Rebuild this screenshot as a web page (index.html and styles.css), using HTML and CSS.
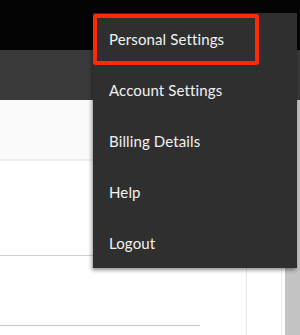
FILE: index.html
```html
<!DOCTYPE html>
<html lang="en">
<head>
    <meta charset="UTF-8">
    <meta name="viewport" content="width=device-width, initial-scale=1.0">
    <title>Account menu</title>
    <link rel="stylesheet" href="styles.css">
</head>
<body>
    <div class="page">
        <div class="window">
            <div class="topbar"></div>
            <div class="toolbar"></div>
            <div class="content">
                <div class="list">
                    <div class="row row-first"></div>
                    <div class="row row-second"></div>
                    <div class="row row-third"><div class="rule"></div></div>
                </div>
                <div class="column"></div>
                <div class="scroll"><div class="thumb"></div></div>
            </div>
        </div>
        <div class="edge"></div>
    </div>

    <ul class="menu">
        <li class="menu-item highlight">Personal Settings</li>
        <li class="menu-item">Account Settings</li>
        <li class="menu-item">Billing Details</li>
        <li class="menu-item">Help</li>
        <li class="menu-item">Logout</li>
    </ul>
</body>
</html>
```

FILE: styles.css
```css
body {
    margin: 0;
    width: 300px;
    height: 335px;
    overflow: hidden;
    font-family: Lato, "Open Sans", sans-serif;
    background-color: #ffffff;
}
.page {
    display: flex;
    height: 335px;
}
.window {
    flex: 1;
    display: flex;
    flex-direction: column;
}
.edge {
    width: 3px;
    background-color: #8c4a84;
}
.topbar {
    height: 50px;
    background-color: #040404;
}
.toolbar {
    height: 50px;
    background-color: #3a3a3a;
}
.content {
    flex: 1;
    display: flex;
}
.list {
    width: 246px;
}
.row-first {
    height: 59px;
    background-color: #fafafa;
    border-bottom: 2px solid #eeeeee;
}
.row-second {
    height: 94px;
    border-bottom: 1px solid #cfcfcf;
}
.row-third {
    height: 70px;
    display: flex;
    flex-direction: column;
    justify-content: flex-end;
}
.rule {
    width: 200px;
    height: 1px;
    background-color: #c8c8c8;
}
.column {
    width: 34px;
    border-left: 1px solid #e6e6e6;
}
.scroll {
    width: 16px;
    border-left: 1px solid #ededed;
    padding: 0 2px 0 3px;
    display: flex;
}
.thumb {
    flex: 1;
    background-color: #c4c4c4;
}
.menu {
    position: absolute;
    left: 93px;
    top: 13px;
    width: 204px;
    margin: 0;
    padding: 0;
    list-style: none;
    background-color: #2f2f2f;
    box-shadow: -1px 2px 4px rgba(0, 0, 0, 0.45);
}
.menu-item {
    position: relative;
    height: 51px;
    line-height: 53px;
    padding-left: 16px;
    color: #f2f2f2;
    font-size: 15px;
    letter-spacing: 0.12px;
}
.highlight::after {
    content: "";
    position: absolute;
    left: 0;
    top: 1px;
    width: 158px;
    height: 43px;
    border: 4px solid #ff2a00;
    border-radius: 3px;
}
```
